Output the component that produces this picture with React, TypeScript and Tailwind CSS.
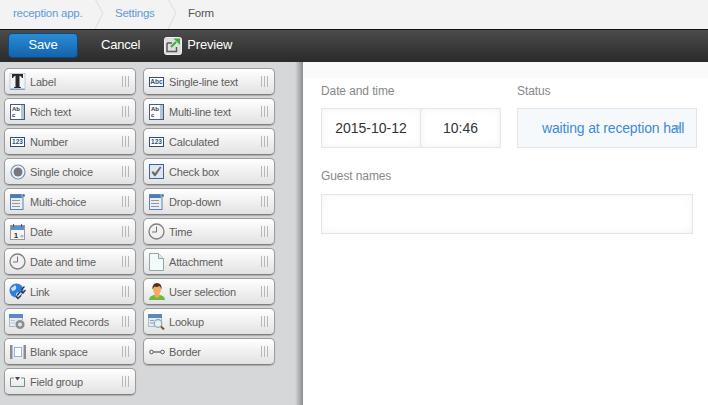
import React from 'react';

const font = { fontFamily: '"Liberation Sans", Arial, sans-serif' };

const TextIcon = () => (
  <svg width="18" height="20" viewBox="0 0 18 20">
    <rect x="1" y="1.500" width="15" height="15" fill="#f4f6f8" stroke="#9db4d0" strokeWidth="0.600" />
    <path d="M3 2h11v4h-1q-.5-2-2.500-2.200V14.500q0 .8 1.500.8v.7H5v-.7q1.500 0 1.500-.8V3.800Q4.500 4 4 6H3z" fill="#2a2a2a" />
    <path d="M1 17.500h15" stroke="#7fa0d0" strokeWidth="1" />
  </svg>
);

const AbcIcon = () => (
  <svg width="15" height="10" viewBox="0 0 15 10">
    <rect x="0.500" y="0.500" width="14" height="9" fill="#fff" stroke="#2f4f7a" />
    <text x="7.500" y="7.300" textAnchor="middle" fontSize="6.500" fontWeight="700" fill="#2f4f7a" style={font}>Abc</text>
  </svg>
);

const RichIcon = () => (
  <svg width="15" height="16" viewBox="0 0 15 16">
    <rect x="0.500" y="0.500" width="14" height="15" fill="#fff" stroke="#3f5f88" />
    <rect x="11" y="1" width="3" height="14" fill="#b9c4d2" />
    <text x="2" y="7" fontSize="6" fontWeight="700" fill="#333" style={font}>Ab</text>
    <text x="2" y="13" fontSize="6" fontWeight="700" fill="#333" style={font}>c</text>
  </svg>
);

const NumIcon = () => (
  <svg width="15" height="10" viewBox="0 0 15 10">
    <rect x="0.500" y="0.500" width="14" height="9" fill="#fff" stroke="#2f4f7a" />
    <text x="7.500" y="7.300" textAnchor="middle" fontSize="6.500" fontWeight="700" fill="#2f4f7a" style={font}>123</text>
  </svg>
);

const RadioIcon = () => (
  <svg width="16" height="16" viewBox="0 0 16 16">
    <circle cx="8" cy="8" r="7" fill="#f0f4f8" stroke="#6f94bd" strokeWidth="1.200" />
    <circle cx="8" cy="8" r="4.500" fill="#77797c" />
  </svg>
);

const CheckIcon = () => (
  <svg width="15" height="15" viewBox="0 0 15 15">
    <rect x="0.500" y="0.500" width="14" height="14" fill="#dfe6ee" stroke="#3f6596" />
    <path d="M2.500 8.500l1.500-1.500 2 2L11 2.500l1.500.8-6 9h-1z" fill="#6a6a6a" />
  </svg>
);

const ListIcon = () => (
  <svg width="15" height="16" viewBox="0 0 15 16">
    <rect x="0.500" y="0.500" width="12.500" height="15" fill="#e8eef5" stroke="#5b84b3" />
    <rect x="1" y="1" width="12" height="3" fill="#4d7cb3" />
    <rect x="12" y="0" width="3" height="3" fill="#3f6ba3" stroke="#fff" strokeWidth="0.500" />
    <path d="M2.500 6.500h8M2.500 9.500h8M2.500 12.500h8" stroke="#444" strokeDasharray="1 1" strokeWidth="1" />
  </svg>
);

const DateIcon = () => (
  <svg width="15" height="16" viewBox="0 0 15 16">
    <rect x="0.500" y="1.500" width="14" height="14" fill="#f5f5f5" stroke="#999" />
    <rect x="1" y="2" width="13" height="4" fill="#5b8fd0" />
    <path d="M3.500 0v3M11.500 0v3" stroke="#555" strokeWidth="1" />
    <text x="6" y="14" textAnchor="middle" fontSize="8" fontWeight="700" fill="#333" style={font}>1</text>
    <path d="M11 13h2v-1.500h-2z" fill="none" stroke="#999" strokeWidth="0.700" />
  </svg>
);

const ClockIcon = () => (
  <svg width="17" height="17" viewBox="0 0 17 17">
    <circle cx="8.500" cy="8.500" r="7.500" fill="#f0f0f0" stroke="#808080" strokeWidth="1.300" />
    <path d="M8.500 3.500v5.500H4" fill="none" stroke="#666" strokeWidth="0.900" />
  </svg>
);

const FileIcon = () => (
  <svg width="15" height="18" viewBox="0 0 15 18">
    <path d="M.5.500h9l5 5v12H.5z" fill="#f6f9f9" stroke="#8aa9a9" />
    <path d="M9.500.500v5h5" fill="#e2ebeb" stroke="#8aa9a9" />
  </svg>
);

const LinkIcon = () => (
  <svg width="17" height="17" viewBox="0 0 17 17">
    <circle cx="7.500" cy="7.500" r="7" fill="#2f7fdc" />
    <path d="M2 5q3-1 4-3 2 2 1 4t-4 2zM7 12q0-3 3-3l3 1q-1 3-4 4z" fill="#cfe3f7" />
    <path d="M15.500 3.500l-3 3M11 9l-3 3.500M7 13.500l2 2 3-3M12 8l2 2 2.500-3" fill="none" stroke="#333" strokeWidth="1.300" />
  </svg>
);

const UserIcon = () => (
  <svg width="16" height="17" viewBox="0 0 16 17">
    <path d="M0 17q0-4 5-5h6q5 1 5 5z" fill="#6dbb3c" />
    <path d="M5.500 10h5v3.500l-2.500 1.500-2.500-1.500z" fill="#f0a860" />
    <ellipse cx="8" cy="6.500" rx="4" ry="5" fill="#f3ab62" />
    <path d="M3.500 6.500Q3 0 8 0t4.500 6.500q-1-3-2-3.500-3 1.500-5 .5-1 1-2 3z" fill="#5a3114" />
  </svg>
);

const RelatedIcon = () => (
  <svg width="17" height="16" viewBox="0 0 17 16">
    <rect x="0.500" y="0.500" width="13" height="12" fill="#e6ebf1" stroke="#a8b8cc" />
    <rect x="0" y="0" width="14" height="4" fill="#5f88bd" />
    <path d="M2 6.500h4M8 6.500h4M2 9h4" stroke="#b8c4d2" />
    <circle cx="11" cy="10.500" r="5" fill="#8c8f92" stroke="#e8e8e8" />
    <circle cx="11" cy="10.500" r="2" fill="#e6e6e6" />
  </svg>
);

const LookupIcon = () => (
  <svg width="17" height="16" viewBox="0 0 17 16">
    <rect x="0.500" y="0.500" width="13" height="12" fill="#e6ebf1" stroke="#a8b8cc" />
    <rect x="0" y="0" width="14" height="4" fill="#5f88bd" />
    <path d="M2 6.500h4M2 9h4" stroke="#8ea0b6" />
    <circle cx="10" cy="9.500" r="3.800" fill="#e3f1f7" stroke="#8aa4b4" strokeWidth="1.200" />
    <path d="M13 12.500l3 3" stroke="#7a5a24" strokeWidth="2" />
  </svg>
);

const BlankIcon = () => (
  <svg width="16" height="14" viewBox="0 0 16 14">
    <rect x="0" y="0" width="2.500" height="14" fill="#8a8c90" />
    <rect x="13.500" y="0" width="2.500" height="14" fill="#8a8c90" />
    <rect x="4.500" y="2.500" width="7" height="9" fill="#fff" stroke="#2a6fd0" strokeDasharray="1 1" />
  </svg>
);

const BorderIcon = () => (
  <svg width="16" height="6" viewBox="0 0 16 6">
    <circle cx="2.500" cy="3" r="1.800" fill="#fff" stroke="#555" />
    <circle cx="13.500" cy="3" r="1.800" fill="#fff" stroke="#555" />
    <path d="M4.500 3h7" stroke="#555" strokeWidth="1.200" />
  </svg>
);

const GroupIcon = () => (
  <svg width="15" height="10" viewBox="0 0 15 10">
    <path d="M4 1H.5v8.500h14V1H11" fill="none" stroke="#6f8f8f" />
    <path d="M5 0h5L7.500 3.500z" fill="#444" />
  </svg>
);

const PreviewIcon = () => (
  <svg width="18" height="19" viewBox="0 0 18 19">
    <rect x="0.500" y="1.500" width="17" height="17" rx="2" fill="#dedede" stroke="#f0f0f0" />
    <path d="M3 7h5M3 7v8.500h9.500V11" fill="none" stroke="#5a5a5a" strokeWidth="1.500" />
    <path d="M7 11l5-5" stroke="#3fae3a" strokeWidth="2.200" />
    <path d="M9.500 2.500h6.500v6.500z" fill="#3fae3a" />
  </svg>
);

const Chevron = () => (
  <svg width="10" height="29" viewBox="0 0 10 29" className="shrink-0">
    <path d="M0 -1L8 13L0 29" fill="none" stroke="#dcdcdc" strokeWidth="1" />
  </svg>
);

const Grip = () => (
  <div className="ml-auto flex gap-[2px] mr-[6px] shrink-0">
    <span className="w-px h-[11px] bg-[#b8b8b8]" />
    <span className="w-px h-[11px] bg-[#b8b8b8]" />
    <span className="w-px h-[11px] bg-[#b8b8b8]" />
  </div>
);

const Tile = ({ icon, label }: { icon: React.ReactNode; label: string }) => (
  <div className="h-[27px] w-[132px] flex items-center rounded-[5px] border border-[#9c9c9c] border-b-[#7f7f7f] bg-gradient-to-b from-white to-[#e2e2e2] shadow-[0_1px_1px_rgba(0,0,0,0.2)]">
    <span className="w-[25px] flex items-center justify-center shrink-0">{icon}</span>
    <span className="pt-[2px] text-[11px] tracking-[-0.2px] text-[#5e5e5e] whitespace-nowrap">{label}</span>
    <Grip />
  </div>
);

const items: [React.ReactNode, string][] = [
  [<TextIcon />, 'Label'],
  [<AbcIcon />, 'Single-line text'],
  [<RichIcon />, 'Rich text'],
  [<RichIcon />, 'Multi-line text'],
  [<NumIcon />, 'Number'],
  [<NumIcon />, 'Calculated'],
  [<RadioIcon />, 'Single choice'],
  [<CheckIcon />, 'Check box'],
  [<ListIcon />, 'Multi-choice'],
  [<ListIcon />, 'Drop-down'],
  [<DateIcon />, 'Date'],
  [<ClockIcon />, 'Time'],
  [<ClockIcon />, 'Date and time'],
  [<FileIcon />, 'Attachment'],
  [<LinkIcon />, 'Link'],
  [<UserIcon />, 'User selection'],
  [<RelatedIcon />, 'Related Records'],
  [<LookupIcon />, 'Lookup'],
  [<BlankIcon />, 'Blank space'],
  [<BorderIcon />, 'Border'],
  [<GroupIcon />, 'Field group'],
];

function App() {
  return (
    <div className="w-[708px] h-[405px] overflow-hidden flex flex-col bg-white" style={font}>
      {/* Breadcrumb */}
      <div className="h-[29px] shrink-0 flex items-center bg-[#f3f3f3] text-[11.5px] tracking-[-0.25px]">
        <span className="pl-[13px] pb-[2px] w-[95px] text-[#5b9bdc]">reception app.</span>
        <Chevron />
        <span className="pl-[10px] pb-[2px] w-[63px] text-[#5b9bdc]">Settings</span>
        <Chevron />
        <span className="pl-[10px] pb-[2px] text-[#555]">Form</span>
      </div>

      {/* Toolbar */}
      <div className="h-[33px] shrink-0 flex items-center pb-[2px] border-t border-[#111] bg-gradient-to-b from-[#4c4c4c] to-[#2a2a2a] text-white text-[13px] tracking-[-0.2px]">
        <button className="ml-[8px] w-[70px] h-[25px] rounded-[4px] border border-[#12467f] bg-gradient-to-b from-[#2a8cd6] to-[#1463ad] text-[13px]">Save</button>
        <span className="ml-[23px]">Cancel</span>
        <span className="ml-[24px] flex items-center gap-[5px]"><PreviewIcon />Preview</span>
      </div>

      <div className="flex-1 flex min-h-0">
        {/* Field palette */}
        <div className="w-[303px] shrink-0 bg-[linear-gradient(to_right,#d6d7d9_295px,#8c8c8c_303px)] pt-[6px] pl-[4px]">
          <div className="grid grid-cols-[132px_132px] gap-x-[7px] gap-y-[3px]">
            {items.map(([icon, label]) => (
              <Tile key={label} icon={icon} label={label} />
            ))}
          </div>
        </div>

        {/* Form canvas */}
        <div className="flex-1 min-w-0">
          <div className="h-[16px] bg-[#fafafa]" />
          <div className="pl-[18px] pt-[6px]">
            <div className="flex gap-[16px]">
              <div>
                <div className="h-[14px] leading-[14px] text-[12px] tracking-[-0.1px] text-[#888]">Date and time</div>
                <div className="mt-[10px] flex h-[40px] text-[14px] text-[#333]">
                  <div className="w-[100px] flex items-center justify-center bg-white border border-[#e6e6e6] shadow-[inset_0_0_6px_rgba(0,0,0,0.06)]">2015-10-12</div>
                  <div className="w-[80px] flex items-center justify-center bg-white border border-l-0 border-[#e6e6e6] shadow-[inset_0_0_6px_rgba(0,0,0,0.06)]">10:46</div>
                </div>
              </div>
              <div>
                <div className="h-[14px] leading-[14px] text-[12px] tracking-[-0.1px] text-[#888]">Status</div>
                <div className="mt-[10px] w-[180px] h-[40px] flex items-center pl-[24px] bg-[#f6f9fc] border border-[#e2e6e8] text-[14px] tracking-[-0.16px] text-[#3f8ad8] whitespace-nowrap relative">
                  waiting at reception hall
                  <span className="absolute left-[155px] top-[10px] text-[13px] leading-[16px] text-[#5aa0e0]">»</span>
                </div>
              </div>
            </div>
            <div className="mt-[21px] h-[14px] leading-[14px] text-[12px] tracking-[-0.1px] text-[#888]">Guest names</div>
            <div className="mt-[11px] w-[372px] h-[40px] bg-white border border-[#e6e6e6] shadow-[inset_0_0_8px_rgba(0,0,0,0.05)]" />
          </div>
        </div>
      </div>
    </div>
  );
}

export default App;
